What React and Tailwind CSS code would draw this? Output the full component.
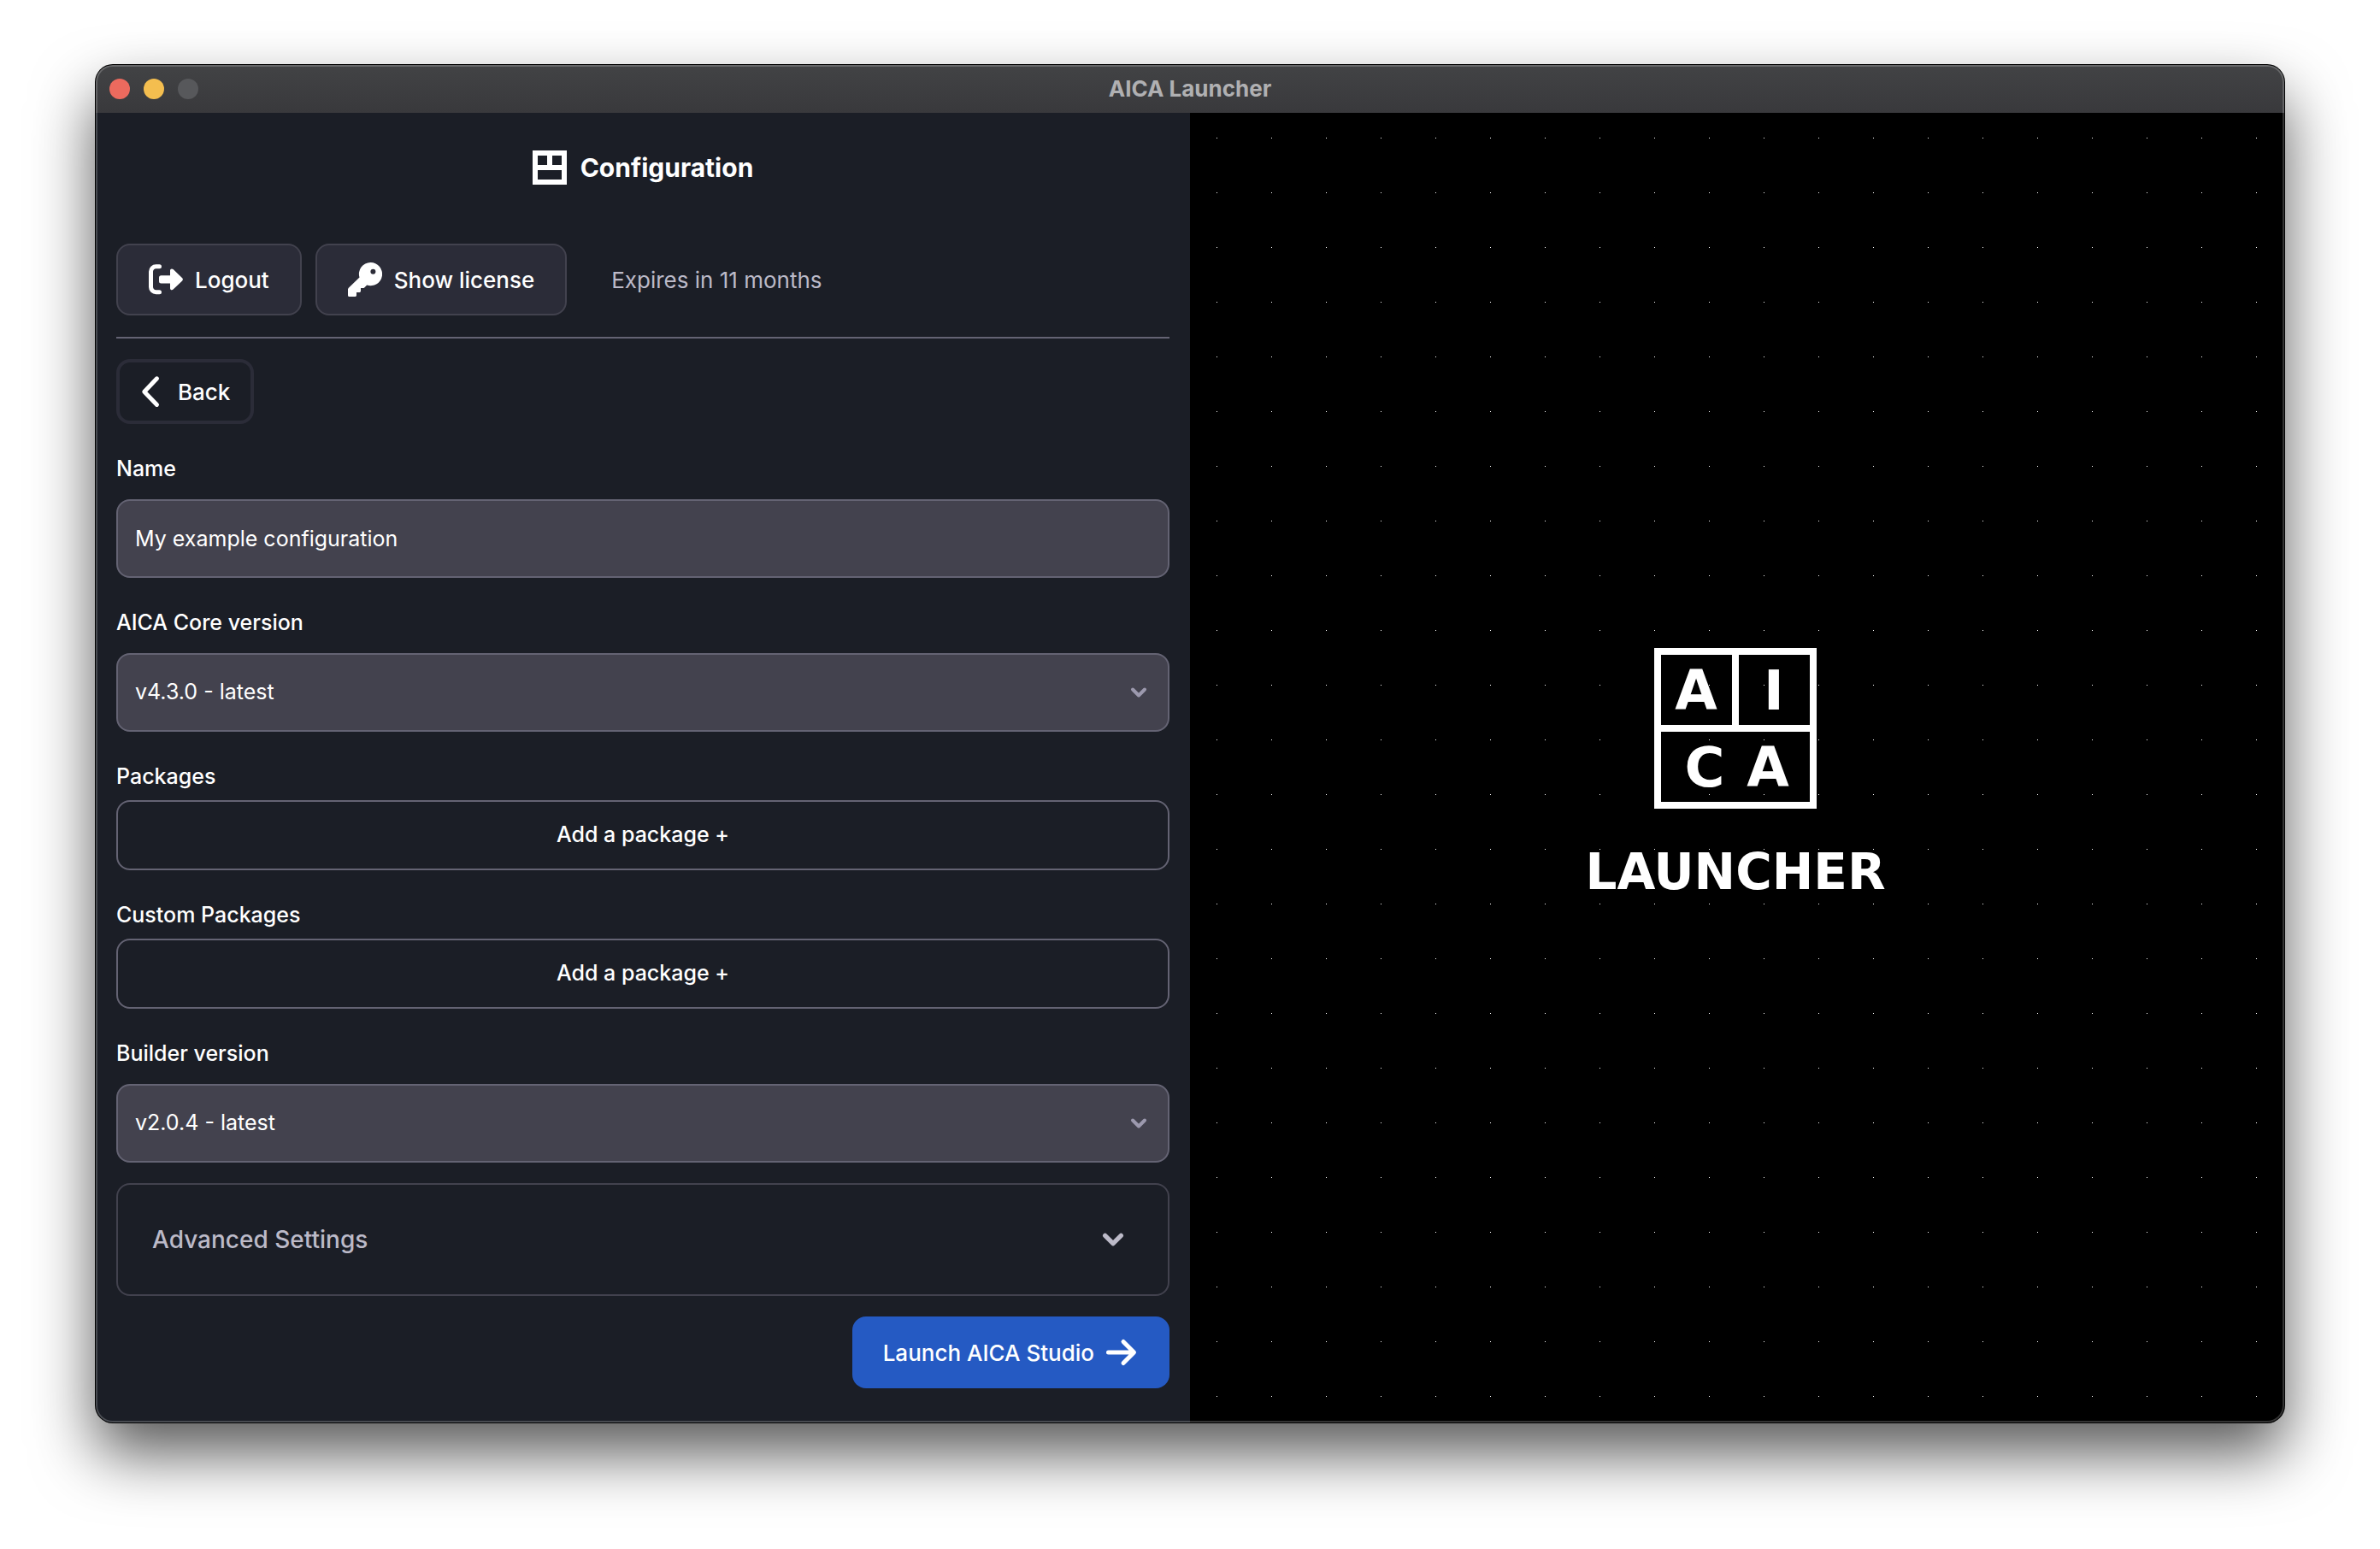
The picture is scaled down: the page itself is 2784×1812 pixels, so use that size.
function HeaderIcon() {
  return (
    <svg viewBox="0 0 40 40" className="size-10" fill="currentColor" fillRule="evenodd" aria-hidden="true">
      <path d="M0 0H40V40H0ZM6 6V17H17V6ZM23 6V17H34V6ZM6 23V34H34V23Z" />
    </svg>
  );
}

function LogoutIcon() {
  return (
    <svg viewBox="0 0 40 40" className="size-10 shrink-0" aria-hidden="true">
      <path d="M12.5 4.8H8.5A6 6 0 0 0 2.5 10.8V28.8A6 6 0 0 0 8.5 34.8H12.5" fill="none" stroke="currentColor" strokeWidth="5" strokeLinecap="round" />
      <path d="M14.5 15.3H25V9.4C25 7.4 27.2 6.8 28.6 8.1L39.2 18.2Q40.6 19.8 39.2 21.4L28.6 31.6C27.2 32.9 25 32.2 25 30.2V24.6H14.5A2.5 2.5 0 0 1 12 22.1V17.8A2.5 2.5 0 0 1 14.5 15.3Z" fill="currentColor" />
    </svg>
  );
}

function KeyIcon() {
  return (
    <svg viewBox="0 0 40 40" className="size-10 shrink-0" fill="currentColor" fillRule="evenodd" aria-hidden="true">
      <path d="M26.4 0A13.6 13.6 0 1 1 22.2 26.5L19.2 29.4Q18.5 30 17.6 30H15V33.6Q15 35 13.6 35H10V38.6Q10 40 8.6 40H1.6Q0 40 0 38.4V31.6Q0 30.5 .8 29.7L13.5 17.6A13.6 13.6 0 0 1 26.4 0ZM29.4 7.7A3 3 0 1 0 29.4 13.7A3 3 0 1 0 29.4 7.7Z" />
    </svg>
  );
}

function BackIcon() {
  return (
    <svg viewBox="0 0 40 40" className="size-10 shrink-0" fill="none" stroke="currentColor" strokeWidth="5" strokeLinecap="round" strokeLinejoin="round" aria-hidden="true">
      <path d="M27.5 4.8L12.8 20.2L27.5 35.4" />
    </svg>
  );
}

function ArrowIcon() {
  return (
    <svg viewBox="0 0 40 40" className="size-10 shrink-0" fill="none" stroke="currentColor" strokeWidth="5" strokeLinecap="round" strokeLinejoin="round" aria-hidden="true">
      <path d="M4.5 20H34M22 7.5L34.5 20L22 32.5" />
    </svg>
  );
}

function Chevron({ className }) {
  return (
    <svg viewBox="0 0 24 24" className={className} fill="none" stroke="currentColor" strokeWidth="4" strokeLinecap="round" strokeLinejoin="round" aria-hidden="true">
      <path d="M5 8.5L12 15.5L19 8.5" />
    </svg>
  );
}

function AicaLogo() {
  return (
    <svg viewBox="0 0 190 188" className="w-[190px] text-[64px] font-bold" fill="white" role="img" aria-label="AICA">
      <path fillRule="evenodd" d="M0 0H190V188H0ZM8 8V90H91V8ZM99 8V90H182V8ZM8 98V180H182V98Z" />
      <g textAnchor="middle">
        <text x="49" y="72">A</text>
        <text x="140" y="72">I</text>
        <text x="59" y="162">C</text>
        <text x="133" y="162">A</text>
      </g>
    </svg>
  );
}

function Label({ htmlFor, children }) {
  return (
    <label htmlFor={htmlFor} className="block text-[25px] leading-10 font-medium">
      {children}
    </label>
  );
}

function VersionField({ id, label, value }) {
  return (
    <div className="mt-8">
      <Label htmlFor={id}>{label}</Label>
      <div className="relative mt-4">
        <select id={id} defaultValue={value} className="block h-[92px] w-full appearance-none rounded-2xl border-2 border-[#646373] bg-[#43424e] px-5 text-[25px]">
          <option>{value}</option>
        </select>
        <Chevron className="pointer-events-none absolute inset-y-0 right-6 my-auto size-6 text-[#9c99ae]" />
      </div>
    </div>
  );
}

function PackageField({ id, label }) {
  return (
    <div className="mt-8">
      <Label htmlFor={id}>{label}</Label>
      <button id={id} type="button" className="mt-2 h-[82px] w-full rounded-2xl border-2 border-[#646373] text-[25px] font-medium">
        Add a package +
      </button>
    </div>
  );
}

const toolbarButton =
  "flex h-[84px] items-center gap-3.5 rounded-2xl border-2 border-[#42424e] bg-[#2b2c38] px-9 font-medium whitespace-nowrap";

export default function App() {
  return (
    <div className="flex min-h-screen flex-col bg-white px-28 pt-[76px] pb-[148px] font-['Inter',sans-serif] text-[26px] text-white">
      <div className="relative flex grow flex-col overflow-hidden rounded-[20px] bg-black shadow-[0_0_0_1px_#000,0_36px_72px_rgba(0,0,0,0.66)]">
        <header className="grid h-14 shrink-0 grid-cols-[1fr_auto_1fr] items-center bg-linear-to-b from-[#424345] to-[#39393c] px-4">
          <div className="flex gap-4">
            <button type="button" aria-label="Close" className="size-6 rounded-full bg-[#ec6a5e]" />
            <button type="button" aria-label="Minimize" className="size-6 rounded-full bg-[#f4be4f]" />
            <button type="button" aria-label="Zoom" disabled className="size-6 rounded-full bg-[#57585b]" />
          </div>
          <span className="font-bold leading-8 text-[#b0b0b2]">AICA Launcher</span>
        </header>

        <div className="grid grow grid-cols-2">
          <main className="bg-[#1b1e26] px-6 pt-11 pb-10">
            <h1 className="flex items-center justify-center gap-4 text-[30px] leading-10 font-bold">
              <HeaderIcon />
              Configuration
            </h1>

            <div className="mt-[69px] flex items-center gap-4">
              <button type="button" className={toolbarButton}>
                <LogoutIcon />
                Logout
              </button>
              <button type="button" className={toolbarButton}>
                <KeyIcon />
                Show license
              </button>
              <p className="ml-9 text-[#bcbac8]">Expires in 11 months</p>
            </div>

            <hr className="mt-[25px] border-t-2 border-[#646373]" />

            <button type="button" className="mt-6 flex h-[76px] items-center gap-3 rounded-2xl border-4 border-[#2b2c38] pr-6 pl-4 font-medium">
              <BackIcon />
              Back
            </button>

            <div className="mt-8">
              <Label htmlFor="name">Name</Label>
              <input id="name" type="text" defaultValue="My example configuration" className="mt-4 block h-[92px] w-full rounded-2xl border-2 border-[#646373] bg-[#43424e] px-5 text-[25px]" />
            </div>

            <VersionField id="core" label="AICA Core version" value="v4.3.0 - latest" />
            <PackageField id="packages" label="Packages" />
            <PackageField id="custom-packages" label="Custom Packages" />
            <VersionField id="builder" label="Builder version" value="v2.0.4 - latest" />

            <button type="button" aria-expanded="false" className="mt-6 flex h-[132px] w-full items-center justify-between rounded-2xl border-2 border-[#42424e] pr-12 pl-10 text-[28px] font-medium text-[#bcbac8]">
              Advanced Settings
              <Chevron className="size-8" />
            </button>

            <button type="button" className="mt-6 ml-auto flex h-[84px] items-center gap-3 rounded-2xl bg-[#255ac3] px-9 font-medium">
              Launch AICA Studio
              <ArrowIcon />
            </button>
          </main>

          <aside className="flex flex-col items-center justify-center gap-11 bg-[conic-gradient(from_270deg_at_1px_1px,#fff_90deg,transparent_0)] bg-size-[64px_64px] bg-position-[31px_29px] pt-3 pr-1 font-['DejaVu_Sans',sans-serif]">
            <AicaLogo />
            <span className="text-[58px] leading-[60px] font-bold">LAUNCHER</span>
          </aside>
        </div>

        <div className="pointer-events-none absolute inset-0 rounded-[20px] shadow-[inset_0_0_0_2px_rgba(255,255,255,0.2)]" />
      </div>
    </div>
  );
}
